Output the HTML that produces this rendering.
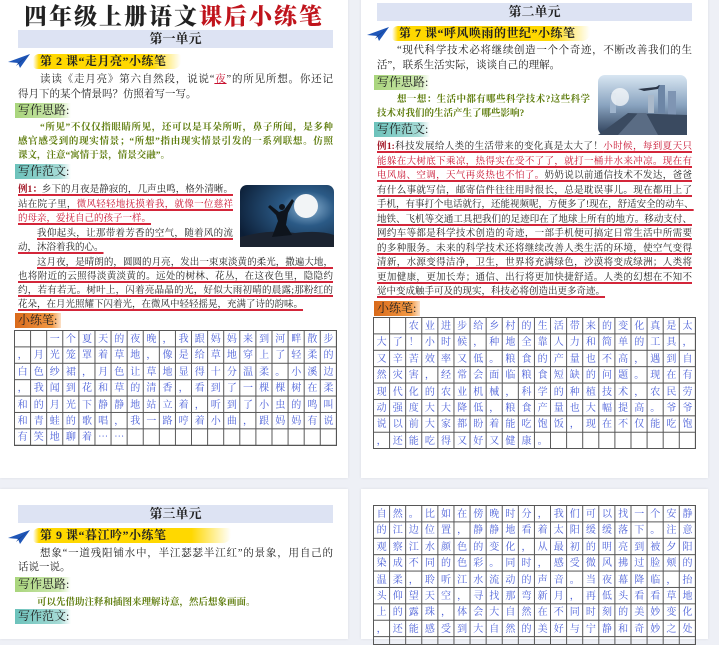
<!DOCTYPE html>
<html><head><meta charset="utf-8"><style>
*{margin:0;padding:0;box-sizing:border-box}
body{width:719px;height:626px;background:#eef0f6;position:relative;overflow:hidden;font-family:"Liberation Serif","Noto Serif CJK SC",serif;color:#222}
.card{position:absolute;background:#fff;box-shadow:0 0 3px rgba(0,0,0,.08)}
.a{position:absolute;white-space:nowrap}
.j{text-align:justify;text-align-last:justify}
.ban{position:absolute;background:#dde3f3;text-align:center;font-size:13px;font-weight:bold;line-height:18px;color:#222}
.brush{position:absolute;height:15px;background:linear-gradient(90deg,rgba(255,216,0,0) 0,#ffd800 6px,#ffd800 80%,rgba(255,216,0,0) 100%);border-radius:6px 3px 8px 4px}
.lt{position:absolute;font-size:12px;font-weight:bold;color:#222;line-height:15px;white-space:nowrap;letter-spacing:.5px}
.lab{position:absolute;font-size:12px;line-height:15px;padding-left:3px;color:#222;white-space:nowrap;height:15px;overflow:hidden}
.g1{background:linear-gradient(90deg,#a9d57c,#cde8b0 80%,rgba(205,232,176,0))}
.g2{background:linear-gradient(90deg,#6cc2bb,#a6dbd6 80%,rgba(166,219,214,0))}
.g3{background:linear-gradient(90deg,#d96a1a,#f39a45 80%,rgba(243,154,69,.3))}
.t{font-size:10.5px;line-height:14px}
.gr{font-size:9.5px;line-height:14px;color:#5f7d0e;font-weight:bold}
.ex{font-size:9.5px;line-height:14px;text-decoration:underline;text-decoration-color:#d3263a;text-decoration-thickness:1.5px;text-underline-offset:2px}
.r{color:#c8102e}
.grid{position:absolute;width:323px;border-right:1px solid #555;border-bottom:1px solid #555;background-image:linear-gradient(to right,#555 1px,transparent 1px),linear-gradient(to bottom,#555 1px,transparent 1px);background-size:16.1px 100%,100% 16.4px;font-family:"Noto Serif CJK SC",serif;font-size:10px;color:#4a5fd8;letter-spacing:6.1px;line-height:16.4px;padding-left:3.6px;white-space:nowrap}
.plane{position:absolute;width:22px;height:14px}
</style></head><body>

<!-- top-left card -->
<div class="card" style="left:0;top:-5px;width:348px;height:483px"></div>
<div class="a" style="left:0;width:348px;top:2px;text-align:center;font-size:23px;font-weight:900;line-height:26px;font-family:'Noto Serif CJK SC',serif;letter-spacing:2px">四年级上册语文<span style="color:#c0141c">课后小练笔</span></div>
<div class="ban" style="left:18px;top:30px;width:315px">第一单元</div>
<svg class="plane" style="left:8px;top:54px" viewBox="0 0 22 14"><path d="M0 8 L22 0 L12 14 L10 9 Z" fill="#1f56b8"/><path d="M10 9 L22 0 L8 12 Z" fill="#15408e"/></svg>
<div class="brush" style="left:33px;top:54px;width:148px"></div>
<div class="lt" style="left:40px;top:54px">第 2 课“走月亮”小练笔</div>
<div class="a t j" style="left:40px;width:293px;top:73px">读读《走月亮》第六自然段，说说“<span class="r" style="text-decoration:underline">夜</span>”的所见所想。你还记</div>
<div class="a t" style="left:18px;top:88px">得月下的某个情景吗？仿照着写一写。</div>
<div class="lab g1" style="left:15px;top:103px;width:56px">写作思路:</div>
<div class="a gr j" style="left:40px;width:293px;top:121px">“所见”不仅仅指眼睛所见，还可以是耳朵所听，鼻子所闻，是多种</div>
<div class="a gr j" style="left:18px;width:315px;top:135px">感官感受到的现实情景；“所想”指由现实情景引发的一系列联想。仿照</div>
<div class="a gr" style="left:18px;top:149px">课文，注意“寓情于景，情景交融”。</div>
<div class="lab g2" style="left:15px;top:164px;width:56px">写作范文:</div>
<div class="a ex j" style="left:18px;width:215px;top:183px"><b class="r" style="color:#a01020">例1：</b>乡下的月夜是静寂的，几声虫鸣，格外清晰。</div>
<div class="a ex j" style="left:18px;width:215px;top:198px">站在院子里，<span class="r">微风轻轻地抚摸着我，就像一位慈祥</span></div>
<div class="a ex r" style="left:18px;top:212px">的母亲，爱抚自己的孩子一样。</div>
<div class="a ex j" style="left:37px;width:196px;top:227px">我仰起头，让那带着芳香的空气，随着风的流</div>
<div class="a ex" style="left:18px;top:241px">动，沐浴着我的心。</div>
<div class="a ex j" style="left:37px;width:296px;top:256px">这月夜，是晴朗的，圆圆的月亮，发出一束束淡黄的柔光，撒遍大地，</div>
<div class="a ex j" style="left:18px;width:315px;top:270px">也将附近的云照得淡黄淡黄的。远处的树林、花丛，在这夜色里，隐隐约</div>
<div class="a ex j" style="left:18px;width:315px;top:284px">约，若有若无。树叶上，闪着亮晶晶的光，好似大雨初晴的晨露;那粉红的</div>
<div class="a ex" style="left:18px;top:298px">花朵，在月光照耀下闪着光，在微风中轻轻摇晃，充满了诗的韵味。</div>
<svg class="a" style="left:240px;top:185px" width="94" height="62" viewBox="0 0 94 62">
<defs><radialGradient id="mo" cx="0.72" cy="0.38" r="0.8"><stop offset="0" stop-color="#8fb6d6"/><stop offset="0.35" stop-color="#2b5a86"/><stop offset="1" stop-color="#0c1e36"/></radialGradient></defs>
<rect width="94" height="62" rx="7" fill="url(#mo)"/>
<circle cx="66" cy="21" r="12" fill="#f2f4f6"/>
<path d="M0 62 L0 52 Q30 44 55 48 Q80 45 94 50 L94 62 Z" fill="#1b2330"/>
<path d="M32 52 L38 36 L36 30 L28 22 L30 20 L39 27 L44 25 L52 14 L54 16 L48 28 L46 40 L52 50 Z" fill="#0e141c"/>
<circle cx="42" cy="22" r="3" fill="#0e141c"/>
</svg>
<div class="lab g3" style="left:15px;top:313px;width:46px">小练笔:</div>
<div class="grid" style="left:14px;top:330px;height:116px">　　一个夏天的夜晚，我跟妈妈来到河畔散步<br>，月光笼罩着草地，像是给草地穿上了轻柔的<br>白色纱裙，月色让草地显得十分温柔。小溪边<br>，我闻到花和草的清香，看到了一棵棵树在柔<br>和的月光下静静地站立着，听到了小虫的鸣叫<br>和青蛙的歌唱，我一路哼着小曲，跟妈妈有说<br>有笑地聊着……</div>

<!-- top-right card -->
<div class="card" style="left:361px;top:-5px;width:347px;height:483px"></div>
<div class="ban" style="left:377px;top:3px;width:315px">第二单元</div>
<svg class="plane" style="left:367px;top:27px" viewBox="0 0 22 14"><path d="M0 8 L22 0 L12 14 L10 9 Z" fill="#1f56b8"/><path d="M10 9 L22 0 L8 12 Z" fill="#15408e"/></svg>
<div class="brush" style="left:392px;top:26px;width:198px"></div>
<div class="lt" style="left:399px;top:26px">第 7 课“呼风唤雨的世纪”小练笔</div>
<div class="a t j" style="left:397px;width:295px;top:44px">“现代科学技术必将继续创造一个个奇迹，不断改善我们的生</div>
<div class="a t" style="left:377px;top:59px">活”，联系生活实际，谈谈自己的理解。</div>
<div class="lab g1" style="left:374px;top:75px;width:56px">写作思路:</div>
<div class="a gr j" style="left:397px;width:193px;top:93px">想一想：生活中都有哪些科学技术?这些科学</div>
<div class="a gr" style="left:377px;top:107px">技术对我们的生活产生了哪些影响?</div>
<div class="lab g2" style="left:374px;top:122px;width:56px">写作范文:</div>
<svg class="a" style="left:598px;top:75px" width="89" height="60" viewBox="0 0 89 60">
<defs><linearGradient id="ct" x1="0" y1="0" x2="0" y2="1"><stop offset="0" stop-color="#d8e6f2"/><stop offset="0.5" stop-color="#8aa4c0"/><stop offset="1" stop-color="#2c3e58"/></linearGradient></defs>
<rect width="89" height="60" rx="7" fill="url(#ct)"/>
<rect x="12" y="18" width="6" height="20" fill="#9fb4cc"/><rect x="60" y="10" width="7" height="28" fill="#6d86a6"/><rect x="70" y="16" width="8" height="24" fill="#7f95b3"/><rect x="50" y="20" width="6" height="18" fill="#aab9ca"/>
<circle cx="22" cy="22" r="9" fill="#fff" opacity=".7"/>
<path d="M0 60 L30 38 L89 40 L89 60 Z" fill="#3a4a60"/>
<path d="M20 60 L40 38 L48 38 L60 60 Z" fill="#5a6c84"/>
<path d="M40 14 L58 12 L62 10 L60 14 L46 16 Z" fill="#2a3446"/>
</svg>
<div class="a ex j" style="left:377px;width:315px;top:140px"><b style="color:#a01020">例1:</b>科技发展给人类的生活带来的变化真是太大了！<span class="r">小时候，每到夏天只</span></div>
<div class="a ex j r" style="left:377px;width:315px;top:155px">能躲在大树底下乘凉，热得实在受不了了，就打一桶井水来冲凉。现在有</div>
<div class="a ex j" style="left:377px;width:315px;top:169px"><span class="r">电风扇、空调，天气再炎热也不怕了。</span>奶奶说以前通信技术不发达，爸爸</div>
<div class="a ex j" style="left:377px;width:315px;top:184px">有什么事就写信，邮寄信件往往用时很长，总是耽误事儿。现在都用上了</div>
<div class="a ex j" style="left:377px;width:315px;top:198px">手机，有事打个电话就行，还能视频呢，方便多了!现在，舒适安全的动车、</div>
<div class="a ex j" style="left:377px;width:315px;top:213px">地铁、飞机等交通工具把我们的足迹印在了地球上所有的地方。移动支付、</div>
<div class="a ex j" style="left:377px;width:315px;top:227px">网约车等都是科学技术创造的奇迹，一部手机便可搞定日常生活中所需要</div>
<div class="a ex j" style="left:377px;width:315px;top:242px">的多种服务。未来的科学技术还将继续改善人类生活的环境，使空气变得</div>
<div class="a ex j" style="left:377px;width:315px;top:256px">清新，水源变得洁净，卫生，世界将充满绿色，沙漠将变成绿洲；人类将</div>
<div class="a ex j" style="left:377px;width:315px;top:271px">更加健康，更加长寿；通信、出行将更加快捷舒适。人类的幻想在不知不</div>
<div class="a ex" style="left:377px;top:285px">觉中变成触手可及的现实，科技必将创造出更多奇迹。</div>
<div class="lab g3" style="left:374px;top:301px;width:46px">小练笔:</div>
<div class="grid" style="left:373px;top:317px;height:132px">　　农业进步给乡村的生活带来的变化真是太<br>大了！小时候，种地全靠人力和简单的工具，<br>又辛苦效率又低。粮食的产量也不高，遇到自<br>然灾害，经常会面临粮食短缺的问题。现在有<br>现代化的农业机械，科学的种植技术，农民劳<br>动强度大大降低，粮食产量也大幅提高。爷爷<br>说以前大家都盼着能吃饱饭，现在不仅能吃饱<br>，还能吃得又好又健康。</div>

<!-- bottom-left card -->
<div class="card" style="left:0;top:489px;width:348px;height:150px"></div>
<div class="ban" style="left:18px;top:505px;width:315px">第三单元</div>
<svg class="plane" style="left:8px;top:530px" viewBox="0 0 22 14"><path d="M0 8 L22 0 L12 14 L10 9 Z" fill="#1f56b8"/><path d="M10 9 L22 0 L8 12 Z" fill="#15408e"/></svg>
<div class="brush" style="left:33px;top:528px;width:198px"></div>
<div class="lt" style="left:40px;top:528px">第 9 课“暮江吟”小练笔</div>
<div class="a t j" style="left:40px;width:293px;top:547px">想象“一道残阳铺水中，半江瑟瑟半江红”的景象，用自己的</div>
<div class="a t" style="left:18px;top:561px">话说一说。</div>
<div class="lab g1" style="left:15px;top:577px;width:56px">写作思路:</div>
<div class="a gr" style="left:37px;top:596px">可以先借助注释和插图来理解诗意，然后想象画面。</div>
<div class="lab g2" style="left:15px;top:609px;width:56px">写作范文:</div>

<!-- bottom-right card -->
<div class="card" style="left:361px;top:489px;width:347px;height:150px"></div>
<div class="grid" style="left:373px;top:505px;height:140px">自然。比如在傍晚时分，我们可以找一个安静<br>的江边位置，静静地看着太阳缓缓落下。注意<br>观察江水颜色的变化，从最初的明亮到被夕阳<br>染成不同的色彩。同时，感受微风拂过脸颊的<br>温柔，聆听江水流动的声音。当夜幕降临，抬<br>头仰望天空，寻找那弯新月，再低头看看草地<br>上的露珠，体会大自然在不同时刻的美妙变化<br>，还能感受到大自然的美好与宁静和奇妙之处</div>
</body></html>
